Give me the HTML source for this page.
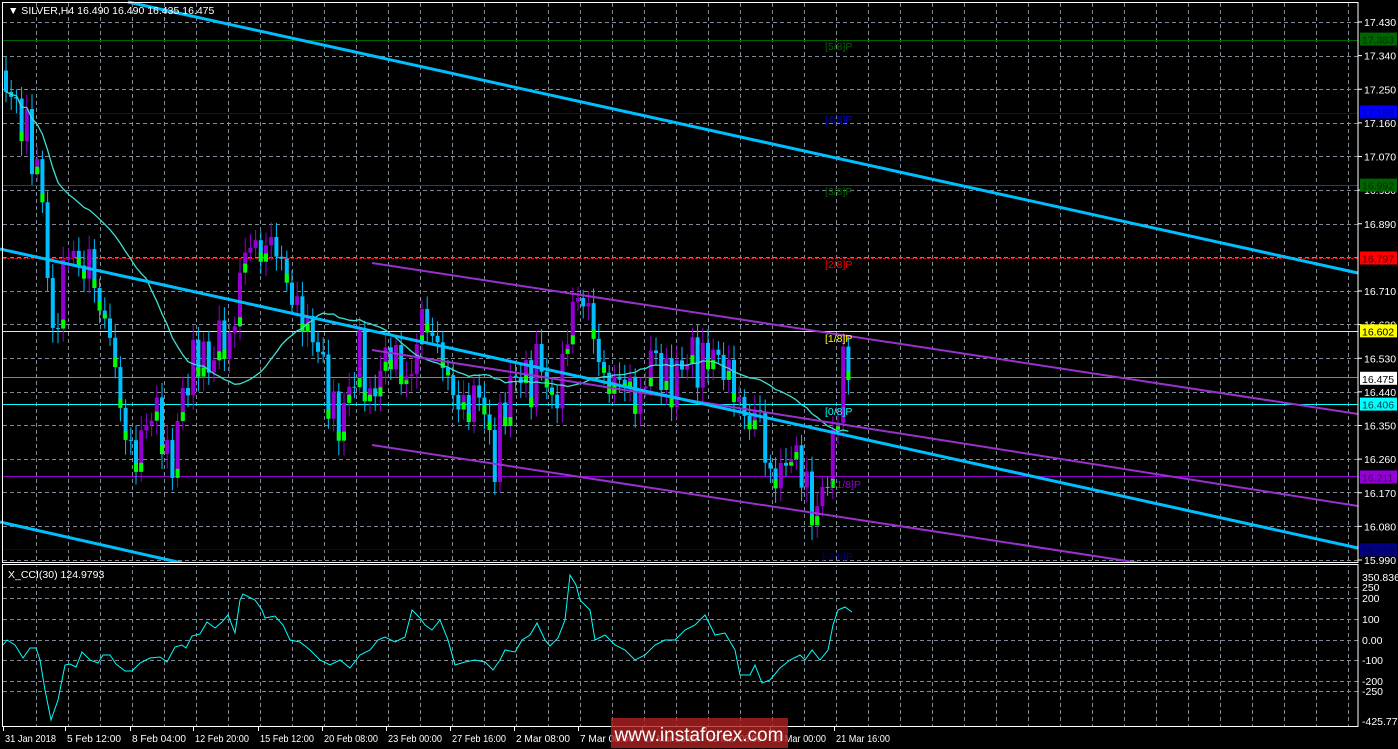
<!DOCTYPE html>
<html><head><meta charset="utf-8"><style>
body{margin:0;background:#000;width:1398px;height:749px;overflow:hidden;font-family:"Liberation Sans",sans-serif}
svg{display:block}
text{font-family:"Liberation Sans",sans-serif;font-size:10.5px}
</style></head><body>
<svg id="s" width="1398" height="749" xmlns="http://www.w3.org/2000/svg">
<rect width="1398" height="749" fill="#000"/>
<g id="grid" stroke="#7f8a96" stroke-dasharray="4,3" stroke-width="1"></g>
<line x1="3" x2="1358" y1="40.5" y2="40.5" stroke="#006400"/>
<line x1="3" x2="1358" y1="113.5" y2="113.5" stroke="#0000cd"/>
<line x1="3" x2="1358" y1="185.5" y2="185.5" stroke="#006400"/>
<line x1="3" x2="1358" y1="258.5" y2="258.5" stroke="#ff0000" stroke-dasharray="3,1"/>
<line x1="3" x2="1358" y1="331.5" y2="331.5" stroke="#ffff00"/>
<line x1="3" x2="1358" y1="377.5" y2="377.5" stroke="#778899"/>
<line x1="3" x2="1358" y1="404.5" y2="404.5" stroke="#00ffff"/>
<line x1="3" x2="1358" y1="476.5" y2="476.5" stroke="#9400d3"/>
<line x1="3" x2="1358" y1="549.5" y2="549.5" stroke="#000080"/>
<g id="candles"></g>
<polyline id="ma" fill="none" stroke="#40e0d0" stroke-width="1.3"/>
<line x1="372" y1="263" x2="1358" y2="414" stroke="#9932cc" stroke-width="2"/>
<line x1="372" y1="350" x2="1358" y2="506" stroke="#9932cc" stroke-width="2"/>
<line x1="372" y1="445" x2="1140" y2="563" stroke="#9932cc" stroke-width="2"/>
<line x1="128" y1="2" x2="1358" y2="273" stroke="#00bfff" stroke-width="3"/>
<line x1="0" y1="249" x2="1358" y2="548" stroke="#00bfff" stroke-width="3"/>
<line x1="0" y1="522" x2="182" y2="563" stroke="#00bfff" stroke-width="3"/>
<g>
<text x="825" y="50" fill="#006400">[5/8]P</text>
<text x="825" y="123" fill="#0000cd">[4/8]P</text>
<text x="825" y="195" fill="#006400">[3/8]P</text>
<text x="825" y="268" fill="#ff0000">[2/8]P</text>
<text x="825" y="342" fill="#ffff00">[1/8]P</text>
<text x="825" y="415" fill="#00ffff">[0/8]P</text>
<text x="830" y="488" fill="#9400d3">[-1/8]P</text>
<text x="822" y="560" fill="#000080">[-2/8]P</text>
</g>
<rect x="0" y="563" width="1360" height="3" fill="#000"/>
<rect x="2.5" y="2.5" width="1355.5" height="560" fill="none" stroke="#fff"/>
<rect x="2.5" y="564.5" width="1355.5" height="162" fill="none" stroke="#fff"/>
<polyline fill="none" stroke="#00ffff" stroke-width="1" points="3,645 7,640 15,645 23,658 30,648 36,648 40,660 45,690 51,720 58,700 65,665 70,664 76,667 82,652 90,660 98,663 103,655 110,655 116,664 125,671 132,671 140,663 150,658 160,657 167,662 175,647 182,645 186,648 192,636 200,634 207,622 215,628 222,622 228,615 235,633 240,600 243,594 255,600 262,610 265,618 275,616 283,625 290,640 300,642 310,650 320,660 330,665 340,660 350,668 360,655 370,650 378,640 385,637 395,642 405,637 412,610 420,618 425,625 432,630 440,620 448,640 455,665 465,662 475,660 485,662 493,670 500,660 505,650 515,652 522,640 530,635 537,623 545,640 550,646 558,638 565,620 570,575 576,585 580,600 590,610 595,640 605,635 615,645 625,650 635,660 645,655 655,645 665,640 675,640 685,630 695,625 705,615 715,635 725,633 735,650 740,675 750,675 755,665 762,683 770,680 780,668 790,660 800,655 805,660 812,650 820,660 828,650 833,625 838,610 845,607 852,612"/>
<text x="8" y="14" fill="#fff">▼ SILVER,H4  16.490 16.490 16.435 16.475</text>
<text x="8" y="578" fill="#fff">X_CCI(30) 124.9793</text>
<g id="rax" fill="#fff"></g>
<g id="tax" fill="#fff"></g>
<rect x="611" y="718" width="177" height="30" fill="#b22222" opacity="0.8"/>
<text x="699" y="741" fill="#fff" text-anchor="middle" style="font-size:19px">www.instaforex.com</text>
</svg>
<script>
var NS="http://www.w3.org/2000/svg";
function el(p,t,a,txt){var e=document.createElementNS(NS,t);for(var k in a)e.setAttribute(k,a[k]);if(txt)e.textContent=txt;document.getElementById(p).appendChild(e);return e;}
for(var i=0;i<17;i++){var y=22+i*33.6;if(y>560)break;el("grid","line",{x1:3,x2:1358,y1:Math.round(y)+.5,y2:Math.round(y)+.5});}
[587,598,619,640,660,681,691].forEach(function(y){el("grid","line",{x1:3,x2:1358,y1:y+.5,y2:y+.5});});
for(var x=36;x<1358;x+=32){el("grid","line",{x1:x+.5,x2:x+.5,y1:3,y2:727});}
var P=[17.430,17.340,17.250,17.160,17.070,16.980,16.890,16.710,16.620,16.530,16.440,16.350,16.260,16.170,16.080,15.990];
function py(p){return 22+(17.430-p)/1.44*538;}
P.forEach(function(p){var y=py(p);el("rax","line",{x1:1358,x2:1362,y1:y,y2:y,stroke:"#fff"});el("rax","text",{x:1364,y:y+4},p.toFixed(3));});
var B=[[17.383,"#006400","#003000"],[17.188,"#0000ff","#000080"],[16.992,"#006400","#003000"],[16.797,"#ff0000","#500000"],[16.602,"#ffff00","#000"],[16.475,"#ffffff","#000"],[16.406,"#00ffff","#004040"],[16.211,"#9400d3","#400060"],[16.016,"#000080","#000040"]];
B.forEach(function(b){var y=py(b[0]);el("rax","rect",{x:1360,y:y-7,width:37,height:13,fill:b[1]});el("rax","text",{x:1362,y:y+4,fill:b[2]},b[0].toFixed(3));});
[["350.8369",581],["250",591],["200",602],["100",623],["0.00",644],["-100",664],["-200",685],["-250",695],["-425.77",725]].forEach(function(a){el("rax","text",{x:1362,y:a[1]},a[0]);});
var T=["31 Jan 2018","5 Feb 12:00","8 Feb 04:00","12 Feb 20:00","15 Feb 12:00","20 Feb 08:00","23 Feb 00:00","27 Feb 16:00","2 Mar 08:00","7 Mar 00:00","12 Mar 16:00","15 Mar 08:00","19 Mar 00:00","21 Mar 16:00"];
var TX=[3,65,130,193,258,322,386,450,514,578,642,706,770,834];
T.forEach(function(t,i){el("tax","line",{x1:TX[i]+.5,x2:TX[i]+.5,y1:727,y2:731,stroke:"#fff"});el("tax","text",{x:TX[i]+2,y:742,"textLength":(i==0?51:54),"lengthAdjust":"spacingAndGlyphs"},t);});
var K=[[5,17.28],[15,17.2],[25,17.15],[40,17.0],[45,16.9],[52,16.55],[60,16.7],[70,16.85],[80,16.75],[90,16.8],[100,16.65],[110,16.6],[120,16.4],[128,16.3],[135,16.25],[145,16.35],[155,16.4],[165,16.3],[170,16.2],[180,16.4],[190,16.5],[200,16.55],[210,16.5],[220,16.6],[230,16.55],[240,16.75],[250,16.85],[260,16.8],[270,16.85],[280,16.8],[290,16.7],[300,16.65],[310,16.6],[320,16.55],[330,16.4],[340,16.35],[350,16.45],[360,16.55],[370,16.4],[380,16.5],[390,16.55],[400,16.5],[410,16.45],[420,16.65],[430,16.6],[440,16.55],[450,16.45],[460,16.4],[470,16.4],[480,16.45],[490,16.3],[495,16.25],[500,16.35],[510,16.45],[520,16.5],[530,16.45],[540,16.55],[550,16.4],[560,16.45],[570,16.65],[580,16.7],[590,16.65],[600,16.5],[610,16.45],[620,16.48],[630,16.45],[640,16.4],[650,16.55],[660,16.5],[670,16.45],[680,16.5],[690,16.55],[700,16.5],[710,16.55],[720,16.52],[730,16.48],[740,16.4],[750,16.35],[760,16.4],[765,16.25],[775,16.2],[785,16.25],[795,16.28],[805,16.2],[812,16.12],[818,16.12],[825,16.2],[830,16.25],[835,16.3],[840,16.5],[845,16.52],[850,16.48]];
function val(x){for(var i=0;i<K.length-1;i++){if(x<=K[i+1][0]){var t=(x-K[i][0])/(K[i+1][0]-K[i][0]);return K[i][1]+t*(K[i+1][1]-K[i][1]);}}return K[K.length-1][1];}
var prev=17.3,closes=[],xs=[];
for(var x=6;x<=850;x+=5.2){
 var c=val(x)+0.04*Math.sin(x*1.7)+0.025*Math.sin(x*0.53);
 var o=prev,hi=Math.max(o,c)+0.02+0.02*Math.abs(Math.sin(x*2.3)),lo=Math.min(o,c)-0.02-0.02*Math.abs(Math.cos(x*1.9));
 var up=c>=o,col=up?"#9400d3":"#00bfff";
 el("candles","line",{x1:x,x2:x,y1:py(hi),y2:py(lo),stroke:col});
 var yt=py(Math.max(o,c)),yb=py(Math.min(o,c));if(yb-yt<1)yb=yt+1;
 el("candles","rect",{x:x-2,y:yt,width:4,height:yb-yt,fill:col});
 if(Math.sin(x*0.9)>-0.2&&yb-yt>6)el("candles","rect",{x:x-2,y:yb-Math.min(9,(yb-yt)/2),width:4,height:Math.min(9,(yb-yt)/2),fill:"#00ff00"});
 closes.push(c);xs.push(x);prev=c;
}
var pts=[];for(var i=0;i<closes.length;i++){var n=Math.min(i+1,28),s=0;for(var j=i-n+1;j<=i;j++)s+=closes[j];pts.push(xs[i]+","+py(s/n).toFixed(1));}
document.getElementById("ma").setAttribute("points",pts.join(" "));
</script>
</body></html>
